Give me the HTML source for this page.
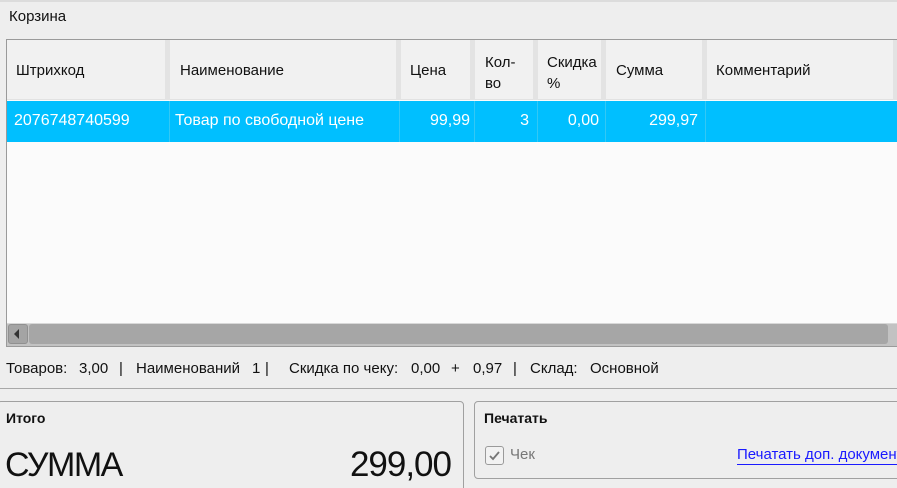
<!DOCTYPE html>
<html><head><meta charset="utf-8"><style>
*{margin:0;padding:0;box-sizing:border-box}
html,body{width:897px;height:488px;overflow:hidden}
body{background:#eeeeee;font-family:"Liberation Sans","DejaVu Sans",sans-serif;font-size:15px;color:#111;position:relative}
.a{position:absolute;white-space:nowrap}
.s{top:360px;font-size:15px}
</style></head><body>
<div class="a" style="left:0;top:0;width:897px;height:2px;background:#dcdcdc"></div>
<div class="a" style="left:9px;top:8px;font-size:15px">Корзина</div>
<!-- table -->
<div class="a" style="left:6px;top:39px;width:891px;height:308px;border:1px solid #9a9a9a;border-right:none;background:#fbfbfb"></div>
<div class="a" style="left:7px;top:40px;width:890px;height:60px;background:#f1f1f1;border-bottom:1px solid #e2e2e2"></div>
<div class="a" style="left:165px;top:40px;width:5px;height:60px;background:#e3e3e3"></div>
<div class="a" style="left:396px;top:40px;width:5px;height:60px;background:#e3e3e3"></div>
<div class="a" style="left:470px;top:40px;width:5px;height:60px;background:#e3e3e3"></div>
<div class="a" style="left:533px;top:40px;width:5px;height:60px;background:#e3e3e3"></div>
<div class="a" style="left:601px;top:40px;width:5px;height:60px;background:#e3e3e3"></div>
<div class="a" style="left:702px;top:40px;width:5px;height:60px;background:#e3e3e3"></div>
<div class="a" style="left:893px;top:40px;width:4px;height:60px;background:#e3e3e3"></div>
<div class="a" style="left:16px;top:62px">Штрихкод</div>
<div class="a" style="left:180px;top:62px">Наименование</div>
<div class="a" style="left:410px;top:62px">Цена</div>
<div class="a" style="left:485px;top:52px;line-height:21px">Кол-<br>во</div>
<div class="a" style="left:547px;top:52px;line-height:21px">Скидка<br>%</div>
<div class="a" style="left:616px;top:62px">Сумма</div>
<div class="a" style="left:716px;top:62px">Комментарий</div>
<!-- selected row -->
<div class="a" style="left:7px;top:101px;width:890px;height:41px;background:#00bfff"></div>
<div class="a" style="left:169px;top:101px;width:1px;height:41px;background:#33c8f5"></div>
<div class="a" style="left:399px;top:101px;width:1px;height:41px;background:#33c8f5"></div>
<div class="a" style="left:474px;top:101px;width:1px;height:41px;background:#33c8f5"></div>
<div class="a" style="left:537px;top:101px;width:1px;height:41px;background:#33c8f5"></div>
<div class="a" style="left:605px;top:101px;width:1px;height:41px;background:#33c8f5"></div>
<div class="a" style="left:705px;top:101px;width:1px;height:41px;background:#33c8f5"></div>
<div class="a" style="left:14px;top:112px;color:#fff;font-size:16px">2076748740599</div>
<div class="a" style="left:175px;top:112px;color:#fff;font-size:16px">Товар по свободной цене</div>
<div class="a" style="left:400px;top:112px;width:70px;text-align:right;color:#fff;font-size:16px">99,99</div>
<div class="a" style="left:475px;top:112px;width:54px;text-align:right;color:#fff;font-size:16px">3</div>
<div class="a" style="left:538px;top:112px;width:61px;text-align:right;color:#fff;font-size:16px">0,00</div>
<div class="a" style="left:606px;top:112px;width:92px;text-align:right;color:#fff;font-size:16px">299,97</div>
<!-- scrollbar -->
<div class="a" style="left:7px;top:323px;width:890px;height:23px;background:#c2c2c2;border-top:1px solid #d8d8d8"></div>
<div class="a" style="left:8px;top:324px;width:20px;height:20px;background:#a4a4a4;border:1px solid #909090;border-radius:3px"></div>
<div class="a" style="left:14px;top:329px;width:0;height:0;border-top:5px solid transparent;border-bottom:5px solid transparent;border-right:5px solid #333"></div>
<div class="a" style="left:29px;top:324px;width:859px;height:20px;background:#a6a6a6;border-radius:3px"></div>
<!-- status -->
<div class="a s" style="left:6px">Товаров:</div>
<div class="a s" style="left:79px">3,00</div>
<div class="a s" style="left:119px">|</div>
<div class="a s" style="left:136px">Наименований</div>
<div class="a s" style="left:252px">1</div>
<div class="a s" style="left:265px">|</div>
<div class="a s" style="left:289px">Скидка по чеку:</div>
<div class="a s" style="left:411px">0,00</div>
<div class="a s" style="left:451px">+</div>
<div class="a s" style="left:473px">0,97</div>
<div class="a s" style="left:513px">|</div>
<div class="a s" style="left:530px">Склад:</div>
<div class="a s" style="left:590px">Основной</div>
<div class="a" style="left:0;top:388px;width:897px;height:1px;background:#a8a8a8"></div>
<!-- left box -->
<div class="a" style="left:-3px;top:401px;width:467px;height:95px;border:1px solid #a0a0a0;border-radius:4px"></div>
<div class="a" style="left:6px;top:410px;font-weight:bold;font-size:14px">Итого</div>
<div class="a" style="left:5px;top:443px;font-size:34px;line-height:44px;letter-spacing:-1.5px">СУММА</div>
<div class="a" style="left:250px;top:443px;width:201px;text-align:right;font-size:35px;line-height:44px;letter-spacing:-1px">299,00</div>
<!-- right box -->
<div class="a" style="left:474px;top:401px;width:430px;height:78px;border:1px solid #a0a0a0;border-radius:4px"></div>
<div class="a" style="left:484px;top:410px;font-weight:bold;font-size:14px">Печатать</div>
<div class="a" style="left:485px;top:446px;width:19px;height:19px;border:1px solid #9a9a9a;border-radius:3px;background:#f2f2f2"></div>
<svg class="a" style="left:488px;top:449px" width="13" height="13"><path d="M2 7 L5 10 L11 3" stroke="#777" stroke-width="1.8" fill="none"/></svg>
<div class="a" style="left:510px;top:446px;color:#777;font-size:15px">Чек</div>
<div class="a" style="left:737px;top:446px;color:#1a1aff;font-size:15px;border-bottom:1px solid #1a1aff;line-height:18px">Печатать доп. документ</div>
</body></html>
